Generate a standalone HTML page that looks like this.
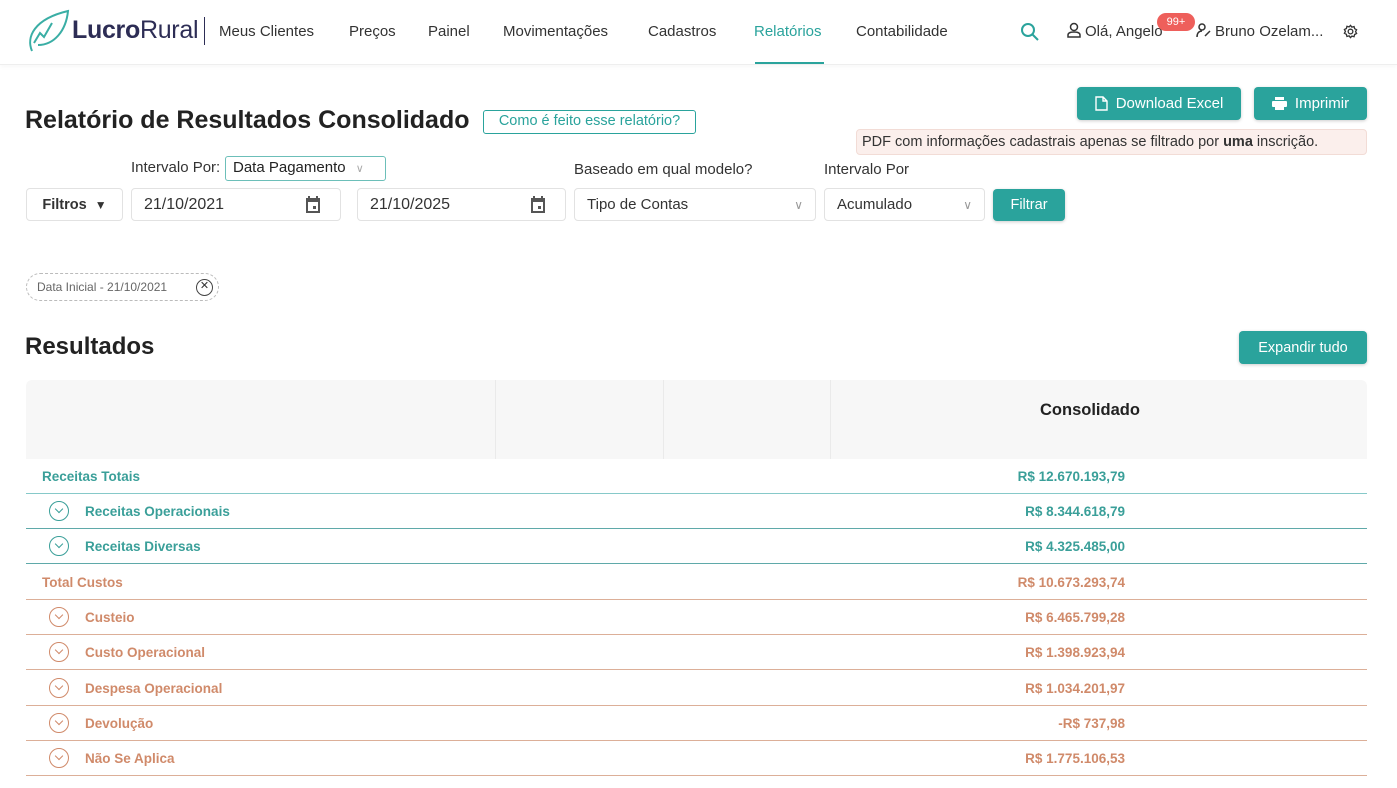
<!DOCTYPE html>
<html><head><meta charset="utf-8"><style>
*{box-sizing:border-box;margin:0;padding:0}
body{width:1397px;height:788px;overflow:hidden;background:#fff;font-family:"Liberation Sans",sans-serif;color:#222;position:relative}
.a{position:absolute}
.nav{font-size:15px;color:#333;top:23px}
.btn{background:#2aa39c;color:#fff;border-radius:4px;font-size:15px;display:flex;align-items:center;justify-content:center;gap:8px;box-shadow:0 1px 3px rgba(0,0,0,.2)}
.inp{border:1px solid #e2e2e2;border-radius:4px;height:33px;font-size:16px;color:#333;display:flex;align-items:center;padding:0 12px;justify-content:space-between}
.lbl{font-size:15px;color:#333}
.row{position:absolute;left:26px;width:1341px;height:35px;font-weight:bold;font-size:13.5px}
.row .t{position:absolute;top:10px}
.row .v{position:absolute;right:242px;top:10px}
.ic{position:absolute;left:23px;top:7px;width:20px;height:20px;border:1.6px solid;border-radius:50%}
.ic:after{content:"";position:absolute;left:5.5px;top:4px;width:5px;height:5px;border-right:1.5px solid;border-bottom:1.5px solid;transform:rotate(45deg)}
.g{color:#3a9f99;border-bottom:1.5px solid #86c9c9}
.g .ic{border-color:#3a9f99;color:#3a9f99}
.o{color:#d08a6a;border-bottom:1.5px solid #dcaf98}
.o .ic{border-color:#d08a6a;color:#d08a6a}
</style></head><body>
<div class="a" style="left:0;top:0;width:1397px;height:65px;border-bottom:1px solid #eee;box-shadow:0 2px 4px rgba(0,0,0,.03)"></div>
<svg class="a" style="left:24px;top:9px" width="46" height="46" viewBox="0 0 46 46" fill="none" stroke="#3aaea5" stroke-width="2"><path d="M8 42 C2 28 10 10 44 2 C42 22 30 36 14 36"/><path d="M10 34 L16 24 L20 28 L28 14"/></svg>
<div class="a" style="left:72px;top:16px;font-size:25px;color:#2d2d55;letter-spacing:-0.3px"><b>Lucro</b><span style="font-weight:normal">Rural</span></div>
<div class="a" style="left:204px;top:17px;width:1px;height:28px;background:#2d2d55"></div>
<div class="a nav" style="left:219px">Meus Clientes</div>
<div class="a nav" style="left:349px">Preços</div>
<div class="a nav" style="left:428px">Painel</div>
<div class="a nav" style="left:503px">Movimentações</div>
<div class="a nav" style="left:648px">Cadastros</div>
<div class="a nav" style="left:754px;color:#2aa39c">Relatórios</div>
<div class="a" style="left:755px;top:62px;width:69px;height:2px;background:#2aa39c"></div>
<div class="a nav" style="left:856px">Contabilidade</div>
<svg class="a" style="left:1020px;top:22px" width="20" height="20" viewBox="0 0 20 20" fill="none" stroke="#2aa39c" stroke-width="2"><circle cx="8" cy="8" r="6"/><path d="M12.5 12.5L18 18"/></svg>
<svg class="a" style="left:1067px;top:22px" width="14" height="16" viewBox="0 0 14 16" fill="none" stroke="#333" stroke-width="1.5"><circle cx="7" cy="5" r="3.5"/><path d="M1 15h12v-2c0-2-2-3-6-3s-6 1-6 3z"/></svg>
<div class="a nav" style="left:1085px">Olá, Angelo</div>
<div class="a" style="left:1157px;top:13px;width:38px;height:18px;border-radius:9px;background:#ee5f5b;color:#fff;font-size:11px;text-align:center;line-height:18px">99+</div>
<svg class="a" style="left:1196px;top:23px" width="16" height="15" viewBox="0 0 16 15" fill="none" stroke="#333" stroke-width="1.5"><circle cx="6" cy="4" r="3"/><path d="M1 14c0-4 2-6 5-6M9 13l5-5"/></svg>
<div class="a nav" style="left:1215px">Bruno Ozelam...</div>
<svg class="a" style="left:1343px;top:24px" width="15" height="15" viewBox="0 0 16 16" fill="none" stroke="#333" stroke-width="1.4"><circle cx="8" cy="8" r="2.5"/><path d="M8 1.5l1.5 1.8 2.3-.6.6 2.3 2.1 1.1-1.1 2 1.1 2-2.1 1.1-.6 2.3-2.3-.6L8 14.5l-1.5-1.8-2.3.6-.6-2.3-2.1-1.1 1.1-2-1.1-2 2.1-1.1.6-2.3 2.3.6z"/></svg>
<div class="a" style="left:25px;top:106px;font-size:25px;font-weight:600;color:#222">Relatório de Resultados Consolidado</div>
<div class="a" style="left:483px;top:110px;width:213px;height:24px;border:1.5px solid #2aa39c;border-radius:3px;color:#2aa39c;font-size:14.5px;text-align:center;line-height:21px">Como é feito esse relatório?</div>
<div class="a btn" style="left:1077px;top:87px;width:164px;height:33px"><svg width="13" height="15" viewBox="0 0 13 15" fill="none" stroke="#fff" stroke-width="1.4"><path d="M1 1h7l4 4v9H1z M8 1v4h4"/></svg>Download Excel</div>
<div class="a btn" style="left:1254px;top:87px;width:113px;height:33px"><svg width="15" height="13" viewBox="0 0 15 13" fill="#fff"><rect x="3" y="0" width="9" height="3"/><rect x="0" y="4" width="15" height="6" rx="1"/><rect x="3" y="8" width="9" height="5"/></svg>Imprimir</div>
<div class="a" style="left:856px;top:129px;width:511px;height:26px;background:#fbefec;border:1px solid #f2dcd6;border-radius:4px;font-size:14.5px;color:#333;line-height:24px;padding-left:5px">PDF com informações cadastrais apenas se filtrado por <b>uma</b> inscrição.</div>
<div class="a lbl" style="left:131px;top:159px">Intervalo Por:</div>
<div class="a" style="left:225px;top:156px;width:161px;height:25px;border:1.5px solid #6cbfb9;border-radius:3px;font-size:15px;padding-left:7px;line-height:22px">Data Pagamento <span style="color:#aaa;font-size:11px;margin-left:6px">&#8744;</span></div>
<div class="a lbl" style="left:574px;top:161px">Baseado em qual modelo?</div>
<div class="a lbl" style="left:824px;top:161px">Intervalo Por</div>
<div class="a inp" style="left:26px;top:188px;width:97px;font-weight:bold;font-size:14.5px;justify-content:center;gap:8px">Filtros <span style="font-size:12px">&#9660;</span></div>
<div class="a inp" style="left:131px;top:188px;width:210px;padding-right:18px">21/10/2021 <svg width="18" height="19" viewBox="0 0 18 19" fill="#555"><path d="M2 3h14v15H2z M4 7v9h10V7z" fill-rule="evenodd"/><rect x="4" y="1" width="2" height="3"/><rect x="12" y="1" width="2" height="3"/><rect x="9" y="11" width="3" height="3"/></svg></div>
<div class="a inp" style="left:357px;top:188px;width:209px;padding-right:18px">21/10/2025 <svg width="18" height="19" viewBox="0 0 18 19" fill="#555"><path d="M2 3h14v15H2z M4 7v9h10V7z" fill-rule="evenodd"/><rect x="4" y="1" width="2" height="3"/><rect x="12" y="1" width="2" height="3"/><rect x="9" y="11" width="3" height="3"/></svg></div>
<div class="a inp" style="left:574px;top:188px;width:242px;font-size:15px">Tipo de Contas <span style="color:#999;font-size:12px">&#8744;</span></div>
<div class="a inp" style="left:824px;top:188px;width:161px;font-size:15px">Acumulado <span style="color:#999;font-size:12px">&#8744;</span></div>
<div class="a btn" style="left:993px;top:189px;width:72px;height:32px;font-size:14.5px">Filtrar</div>
<div class="a" style="left:26px;top:273px;width:193px;height:28px;border:1px dashed #bbb;border-radius:14px;font-size:12px;color:#666;line-height:26px;padding-left:10px">Data Inicial - 21/10/2021 <span style="position:absolute;right:5px;top:5px;width:17px;height:17px;border:1.5px solid #444;border-radius:50%;font-size:11px;line-height:13px;text-align:center;color:#333">✕</span></div>
<div class="a" style="left:25px;top:333px;font-size:24px;font-weight:600">Resultados</div>
<div class="a btn" style="left:1239px;top:331px;width:128px;height:33px;font-size:14.5px">Expandir tudo</div>
<div class="a" style="left:26px;top:380px;width:1341px;height:79px;background:#f7f7f7;border-radius:6px 6px 0 0"></div>
<div class="a" style="left:495px;top:380px;width:1px;height:79px;background:#eaeaea"></div>
<div class="a" style="left:663px;top:380px;width:1px;height:79px;background:#eaeaea"></div>
<div class="a" style="left:830px;top:380px;width:1px;height:79px;background:#eaeaea"></div>
<div class="a" style="left:1040px;top:401px;font-size:16.5px;font-weight:bold;color:#222">Consolidado</div>
<div class="row g" style="top:459px"><span class="t" style="left:16px">Receitas Totais</span><span class="v">R$ 12.670.193,79</span></div>
<div class="row g" style="top:494px;border-bottom-color:#5fa9a9"><i class="ic"></i><span class="t" style="left:59px">Receitas Operacionais</span><span class="v">R$ 8.344.618,79</span></div>
<div class="row g" style="top:529px;border-bottom-color:#5fa9a9"><i class="ic"></i><span class="t" style="left:59px">Receitas Diversas</span><span class="v">R$ 4.325.485,00</span></div>
<div class="row o" style="top:565px"><span class="t" style="left:16px">Total Custos</span><span class="v">R$ 10.673.293,74</span></div>
<div class="row o" style="top:600px"><i class="ic"></i><span class="t" style="left:59px">Custeio</span><span class="v">R$ 6.465.799,28</span></div>
<div class="row o" style="top:635px"><i class="ic"></i><span class="t" style="left:59px">Custo Operacional</span><span class="v">R$ 1.398.923,94</span></div>
<div class="row o" style="top:671px"><i class="ic"></i><span class="t" style="left:59px">Despesa Operacional</span><span class="v">R$ 1.034.201,97</span></div>
<div class="row o" style="top:706px"><i class="ic"></i><span class="t" style="left:59px">Devolução</span><span class="v">-R$ 737,98</span></div>
<div class="row o" style="top:741px"><i class="ic"></i><span class="t" style="left:59px">Não Se Aplica</span><span class="v">R$ 1.775.106,53</span></div>
</body></html>
